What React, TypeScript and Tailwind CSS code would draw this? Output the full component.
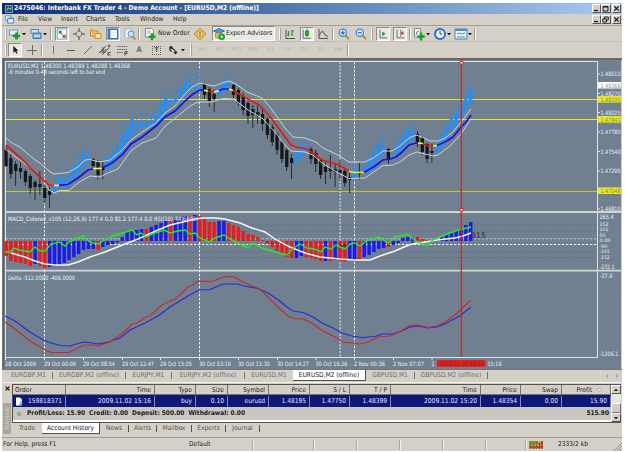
import React from 'react';

type Tone = 'd' | 'u';
type Candle = [Tone, number, number, number, number];

const STEP = 4.84;
const xAt = (i: number) => 6 + i * STEP;

// tone, high, body top, body bottom, low
const candles: Candle[] = [
  ['d', 146, 149, 166, 167], ['d', 154, 158, 174, 179], ['d', 161, 164, 171, 186], ['d', 162, 168, 172, 179],
  ['d', 169, 171, 182, 186], ['d', 174, 176, 188, 194], ['d', 180, 182, 187, 200], ['d', 171, 184, 187, 195],
  ['d', 185, 188, 198, 203], ['d', 187, 191, 195, 208], ['u', 178, 186, 192, 194], ['u', 171, 176, 185, 191],
  ['u', 166, 179, 184, 189], ['u', 171, 177, 183, 191], ['u', 162, 166, 178, 181], ['u', 154, 163, 173, 178],
  ['u', 147, 152, 168, 170], ['u', 147, 157, 161, 166], ['d', 158, 159, 166, 170], ['d', 160, 162, 175, 179],
  ['d', 162, 167, 170, 179], ['u', 154, 158, 169, 171], ['u', 149, 153, 163, 167], ['u', 142, 146, 157, 160],
  ['u', 131, 135, 151, 154], ['u', 122, 128, 143, 147], ['u', 116, 119, 136, 140], ['u', 116, 124, 129, 134],
  ['u', 111, 122, 128, 131], ['u', 111, 123, 127, 130], ['u', 113, 121, 126, 128], ['u', 110, 114, 123, 126],
  ['u', 98, 103, 121, 122], ['u', 92, 97, 111, 114], ['u', 88, 100, 105, 107], ['u', 96, 98, 102, 105],
  ['u', 83, 88, 99, 102], ['u', 76, 81, 94, 97], ['u', 69, 84, 88, 92], ['u', 74, 84, 88, 90],
  ['u', 70, 85, 86, 90], ['d', 83, 84, 95, 99], ['d', 87, 89, 101, 107], ['d', 90, 94, 99, 112],
  ['u', 84, 88, 97, 98], ['u', 76, 80, 91, 93], ['u', 73, 83, 88, 91], ['d', 84, 85, 95, 98],
  ['d', 88, 90, 103, 106], ['d', 93, 96, 110, 115], ['d', 101, 103, 116, 124], ['d', 105, 109, 115, 128],
  ['d', 103, 112, 116, 124], ['d', 109, 114, 124, 131], ['d', 117, 119, 135, 139], ['d', 124, 127, 142, 146],
  ['d', 132, 134, 150, 155], ['d', 140, 142, 159, 163], ['d', 148, 150, 167, 171], ['d', 154, 158, 163, 179],
  ['u', 149, 152, 162, 164], ['u', 139, 144, 156, 160], ['u', 134, 147, 151, 158], ['d', 147, 149, 159, 164],
  ['d', 150, 153, 164, 172], ['d', 158, 160, 175, 179], ['d', 162, 167, 172, 184], ['d', 155, 168, 171, 179],
  ['d', 163, 169, 172, 187], ['d', 160, 170, 173, 179], ['d', 169, 171, 183, 187], ['d', 172, 177, 180, 193],
  ['u', 163, 168, 178, 180], ['d', 163, 173, 174, 180], ['u', 160, 167, 173, 178], ['u', 155, 159, 170, 173],
  ['u', 147, 151, 167, 170], ['u', 139, 144, 159, 162], ['u', 131, 148, 152, 160], ['d', 148, 149, 160, 164],
  ['u', 147, 156, 157, 166], ['u', 139, 143, 154, 158], ['u', 131, 136, 151, 154], ['u', 123, 129, 144, 147],
  ['u', 120, 131, 138, 142], ['d', 131, 134, 142, 147], ['d', 136, 138, 152, 155], ['d', 143, 144, 159, 163],
  ['d', 144, 151, 153, 163], ['u', 141, 145, 153, 154], ['u', 131, 135, 148, 149], ['u', 123, 127, 138, 141],
  ['u', 114, 119, 130, 133], ['u', 107, 112, 126, 128], ['u', 99, 104, 119, 123], ['u', 92, 97, 111, 113],
  ['u', 84, 88, 104, 104],
];

const macdEnds = [
  256, 261, 262, 263, 264, 266, 264, 266, 268, 267, 266, 265, 263, 260, 257, 254, 250, 249, 249, 250, 247, 245, 244, 242.5,
  237, 232, 231, 230, 229, 229, 227, 225, 223, 221, 221, 220, 218, 216, 216, 215, 216, 219, 222, 222, 221, 221, 223, 225,
  227, 231, 234, 235, 237, 240, 244, 247, 251, 254, 257, 258, 258, 256, 257, 258, 259, 261, 261, 261, 260, 261, 262, 260,
  260, 260, 257, 255, 252, 249, 248, 247, 245, 243, 238, 237, 238, 237, 239, 240, 240, 239, 237, 235, 233, 231, 229, 225, 222,
];
const macdTones =
  'rrrrrrbrrbbbbbbbbbbrbbbbbbbbbrbbbbrbbbrbrrrrbbrrrrrrrrrrrrrrbbrrrrbrbrrbbrbbbbbrbbbbbrrrbbbbbbbbb';

const maSegments: [string, string][] = [
  ['#e8190c', '6,145 15,153 25,162 30,168 40,177 49,185 54,185.5'],
  ['#f4ee8a', '54,185.5 59,185.3'],
  ['#1414e6', '59,185.3 68,184.5 78,178 88,170 93,169'],
  ['#f4f41c', '93,168.6 102,168.4'],
  ['#1414e6', '102,168 112,163 122,155 131,144 142,137 156,126 165,117 175,111 185,101 193,94 200,90 204,90.2'],
  ['#f4f41c', '204,90.3 208,91'],
  ['#e8190c', '208,91 214,91.8'],
  ['#f4ee8a', '214,91.8 219,90.8'],
  ['#1414e6', '219,90.8 223,89 229,89'],
  ['#f4f41c', '229,89 233,90.5'],
  ['#e8190c', '233,90.5 246,98 259,105 268,114 280,130 291,145 296,147 307,149 313,153 322,160 333,163 339,165 349,171'],
  ['#f4f41c', '349,171.5 355,172.5 364,172.5'],
  ['#1414e6', '364,172.5 375,166 383,160 390,159 396,157 402,152 409,145 416,143 418,143'],
  ['#f4f41c', '418,143 423,143.5'],
  ['#e8190c', '423,143.8 428,146 433,146'],
  ['#f4f41c', '433,146 437,145.5'],
  ['#1414e6', '437,145.5 445,142 453,137 461,127 466,122 471,115'],
];

const upperBand =
  '5,137 12,143 20,147 28,154 35,160 40,163 49,171 54,174 68,172.5 78,167 85,160 90,159.5 100,162 110,160 122,150 131,140 142,132 156,123 165,113 175,106 185,94 192,87 200,83 209,85 214,86 222,83 229,81 236,84 247,92 262,98 270,107 285,128 293,137 305,138 316,142 323,148 338,155 349,162 365,162 375,157 383,151 392,151 400,146 409,138 416,135 422,137 430,141 438,141 445,138 453,132 461,122 471,109';
const lowerBand =
  '5,149 20,160 35,172 44,181 49,190 54,193 60,190.5 69,190.5 78,183 90,176 100,177 108,173 118,169 131,151 142,143 156,138 165,126 178,116 190,106 198,102 212,102 223,98.5 233,99 239,103 248,110 262,118 275,132 285,145 291,151 305,152 313,155 322,163 335,171 349,178.5 365,178 375,171 383,165.5 393,165 400,162 409,155 417,152 425,154 433,156 438,155 450,146 461,134 471,119';
const signalLine =
  '11,253 25,257 35,261 45,264 55,265 68,265 78,262 90,257 105,252 120,246 138,239 158,230 170,225 183,222 195,219 203,218 216,218 225,219 240,223 252,228 265,232 275,239 290,247 305,253 320,257 340,259 355,260 370,260 380,256 395,251 404,247 412,244 425,242 437,240 455,238 463,236 471,233';
const rsiLine =
  '5,252 10,252 14,248 19,250 30,252 35,247 40,251 45,251 51,244 59,242 65,246 69,242 78,238 83,236 90,242 98,244 103,241 112,236 123,233 132,230 137,235 141,233 146,237 152,234 164,230 170,233 178,231 185,230 190,234 195,233 200,238 209,242 215,238 224,235 230,239 240,244 248,248 253,243 262,248 275,252 287,255 292,249 300,244 307,248 314,249 321,252 325,247 331,249 336,245 345,249 350,244 355,243 360,246 366,241 373,239 379,237 388,243 395,237 401,236 407,234 413,239 420,243 427,245 433,240 440,237 447,234 455,231 463,229 471,227';
const deltaSlow =
  '5,316 15,321 30,332 40,338 48,342 60,345.5 70,346 78,343.5 84,342 92,343 99,344 108,342 120,338 130,330 145,323 158,316 170,307 183,299 193,293 200,290 210,289.5 223,284 237,284 244,286 258,288.5 268,293 277,299 287,307 293,311 303,312.5 313,317 322,323 333,328 342,333 352,336 362,337.5 375,336.5 382,334 393,334 402,331 410,327 418,326 428,328 437,327 447,323 461,315 471,307';
const deltaFast =
  '5,322 15,329 30,341 40,347 47,351 52,352.5 68,352.5 74,350 84,345 93,345 98,346 107,343 118,337 125,331 132,324 137,323 144,318 150,316 162,305 175,299 183,292 188,287 193,285 198,281 212,281.5 218,279 225,276.5 234,277 241,281 252,286 260,289 270,299 279,308 288,316 294,318.5 304,319 313,324 323,331 335,337 343,342 352,343 360,344 368,342 378,337 390,336 397,333 403,330 409,325.5 418,325 428,327.5 437,326 447,321 456,314 471,300';

const priceLabels: [string, number][] = [
  ['1.48515', 74], ['1.48270', 93.5], ['1.48025', 112.5], ['1.47785', 132], ['1.47540', 151.5], ['1.47295', 171], ['1.46810', 209],
];
const levelLabels: [string, number][] = [['1.48195', 99.3], ['1.47941', 119.3], ['1.47048', 190.7]];
const macdLabels: [string, number, number][] = [
  ['152', 224.3, 9], ['101', 229.6, 9], ['50', 235, 6], ['0.00', 240.4, 11],
  ['-90', 246, 8], ['-101', 251.6, 10], ['-152', 257, 10],
];
const timeLabels: [string, number, number][] = [
  ['28 Oct 2009', 5, 31], ['29 Oct 00:09', 44, 32], ['29 Oct 08:54', 83, 32], ['29 Oct 12:47', 122, 32],
  ['29 Oct 15:05', 160, 32], ['30 Oct 03:19', 199, 32], ['30 Oct 11:30', 238, 32], ['30 Oct 14:27', 277, 32],
  ['30 Oct 16:26', 315.5, 32], ['2 Nov 00:36', 354, 31], ['2 Nov 07:07', 393, 31], ['2', 431.5, 3], ['15:19', 487.5, 14],
];

type LabelProps = { x: number; y: number; w: number; fill?: string; size?: number; children: string };

const Label = ({ x, y, w, fill = '#eef2f5', size = 6, children }: LabelProps) => (
  <text x={x} y={y + size * 0.37} textLength={w} lengthAdjust="spacingAndGlyphs" fill={fill} fontSize={size}>
    {children}
  </text>
);

const Chart = () => (
  <svg viewBox="3 60 619 309" className="block h-[309px] w-[619px] bg-[#708090]">
    {/* pane frames */}
    <g stroke="#dfe3e8" fill="none">
      <path d="M5.5 357.5V61.5H597.5V357.5" />
      <path d="M5 212H621M5 270.7H621" strokeWidth="1.8" stroke="#d4d4d2" />
      <path d="M5 357.5H598" />
      {timeLabels.slice(0, 12).map(([, x]) => <path key={x} d={`M${x + 0.5} 357V360`} />)}
      {priceLabels.map(([, y]) => <path key={y} d={`M597 ${y}H600`} />)}
    </g>
    <path d="M3.5 60V369" stroke="#55606c" />
    <path d="M621.5 60V369" stroke="#c8cdd2" />

    {/* grid and levels */}
    <g stroke="#eef1f4" strokeDasharray="2.4 1.6">
      <path d="M44.5 62V357M199.5 62V357M354.5 62V357" />
      <path d="M6 238.8H597" stroke="#c0c8d0" />
      <path d="M6 244.5H597" />
    </g>
    <path d="M340.2 62V357" stroke="#b9c1ca" strokeWidth="1.8" strokeDasharray="2 1.4" />
    <path d="M6 225.2H597M6 231H597M6 252H597M6 257.5H597" stroke="#59636e" strokeWidth=".8" strokeDasharray="1.3 1.7" />
    <path d="M6 99.5H597M6 119.5H597" stroke="#e6e62c" />
    <path d="M6 191.5H597" stroke="#c3c62c" />

    {/* price pane */}
    {candles.map(([tone, high, top, bottom, low], i) => {
      const x = xAt(i);
      const fill = tone === 'd' ? '#14181c' : '#1e90ff';
      return (
        <g key={i} fill={fill}>
          <rect x={x - 0.4} y={high} width={0.8} height={low - high} />
          <rect x={x - 1.6} y={top} width={3.3} height={Math.max(bottom - top, 1)} />
        </g>
      );
    })}
    <polyline points={upperBand} fill="none" stroke="#ccd3d9" />
    <polyline points={lowerBand} fill="none" stroke="#ccd3d9" />
    {maSegments.map(([stroke, points]) => (
      <polyline key={points} points={points} fill="none" stroke={stroke} strokeWidth="1.7" />
    ))}

    {/* MACD pane */}
    {macdEnds.map((end, i) => (
      <rect
        key={i}
        x={xAt(i) - 1.6}
        y={Math.min(end, 241)}
        width={3.4}
        height={Math.abs(end - 241)}
        fill={macdTones[i] === 'r' ? '#ec1a1a' : '#1a1af0'}
      />
    ))}
    <path d="M340 244l2 3 2-3 2 3 2-3M411 242l3 1" stroke="#2a1a18" fill="none" />
    <polyline points={signalLine} fill="none" stroke="#f6f8fa" strokeWidth="1.4" />
    <polyline points={rsiLine} fill="none" stroke="#1ef01e" strokeWidth="1.4" />
    <text x="471.5" y="238.4" textLength="14" fill="#1c2126" fontSize="7.5">315</text>

    {/* delta pane */}
    <polyline points={deltaSlow} fill="none" stroke="#2828d8" strokeWidth="1.1" />
    <polyline points={deltaFast} fill="none" stroke="#c8282a" strokeWidth="1.1" />

    {/* cursor line */}
    <path d="M461.3 62V357" stroke="#c62a24" strokeWidth="1.2" />
    <path d="M460 61.5h3v2.6h-3zM460 208.5h3v2.6h-3z" fill="#fff" stroke="#d8241c" />

    <Label x={8} y={65.5} w={122}>EURUSD,M2  1.48300 1.48389 1.48288 1.48368</Label>
    <Label x={8} y={71.9} w={97}>-6 minutes 0-48 seconds left to bar end</Label>
    <Label x={8} y={218.4} w={188}>MACD_Colored_v105 (12,26,9) 177.4 0.0 81.2 177.4 0.0  RSI(10) 74.6602</Label>
    <Label x={8} y={277.8} w={67}>Delta -512.0000 -406.0000</Label>

    {/* scales */}
    {priceLabels.map(([text, y]) => <Label key={text} x={600.5} y={y} w={20}>{text}</Label>)}
    <rect x="598" y="82" width="23" height="6.5" fill="#fff" />
    <Label x={600.5} y={85.3} w={20} fill="#8a939c">1.48368</Label>
    {levelLabels.map(([text, y]) => (
      <g key={text}>
        <rect x="598" y={y - 3.3} width="23" height="6.6" fill="#e8e62c" />
        <Label x={600.5} y={y} w={20} fill="#8f8c22">{text}</Label>
      </g>
    ))}
    <Label x={599.5} y={216.8} w={14}>265.4</Label>
    {macdLabels.map(([text, y, w]) => <Label key={text} x={599.5} y={y} w={w} size={4.8}>{text}</Label>)}
    <Label x={599.5} y={266.3} w={15}>-272.1</Label>
    <Label x={599.5} y={276} w={13}>-37.9</Label>
    <Label x={599.5} y={353.5} w={19}>-1206.1</Label>
    {timeLabels.map(([text, x, w]) => <Label key={text} x={x} y={363.5} w={w}>{text}</Label>)}
    <rect x="437" y="360" width="48.5" height="6.8" fill="#ea1c18" />
    <Label x={440} y={363.5} w={43} fill="#7d2420">2009.11.02 15:04</Label>
  </svg>
);

const Ico = ({ children, className = '' }: { children: React.ReactNode; className?: string }) => (
  <svg viewBox="0 0 14 14" fill="none" className={`h-3.5 w-3.5 shrink-0 ${className}`}>
    {children}
  </svg>
);

const Caret = ({ className = '' }: { className?: string }) => (
  <svg viewBox="0 0 4 4" className={`h-1 w-1 shrink-0 ${className}`}><path d="M0 1h4L2 3.2z" fill="#111" /></svg>
);

const Grip = ({ className = '' }: { className?: string }) => (
  <div className={`h-3 w-[2px] shrink-0 border-l border-[#f6f4ef] bg-[#a5a198] ${className}`} />
);

const Sep = ({ className = '' }: { className?: string }) => (
  <div className={`h-3 w-[2px] shrink-0 border-r border-white bg-[#9b978e] ${className}`} />
);

const pressed = 'border border-t-[#8f8b83] border-l-[#8f8b83] border-b-white border-r-white bg-[#e9eae6]';

const Magnifier = ({ plus, className }: { plus?: boolean; className: string }) => (
  <Ico className={className}>
    <path d="M8 8l4 4" stroke="#c48a28" strokeWidth="2" />
    <circle cx="5.8" cy="5.8" r="3.6" fill="#d8eefc" stroke="#3f85c8" strokeWidth="1.2" />
    <path d={plus ? 'M3.8 5.8h4M5.8 3.8v4' : 'M3.8 5.8h4'} stroke="#2464b0" strokeWidth="1.2" />
  </Ico>
);

const Toolbar = () => (
  <div className="flex h-4 items-center border-b border-[#c3bfb6]">
    <Grip className="ml-[3px]" />
    <Ico>
      <path d="M2.5 3h8v5h-8z" fill="#eaf3fb" stroke="#5f93c2" />
      <path d="M9.5 5.4v7.2M5.9 9h7.2" stroke="#159a20" strokeWidth="2.6" />
    </Ico>
    <Caret className="ml-px" />
    <Ico className="ml-[3px]">
      <path d="M2 2.5h7.5v4H2z" fill="#cbe2f5" stroke="#5084b8" />
      <path d="M4 6h8v5.5H4z" fill="#82b2dc" stroke="#3d74ad" />
      <path d="M5 9h6" stroke="#fff" />
    </Ico>
    <Caret />
    <Sep className="ml-[3px]" />
    <Ico className={`ml-[3px] ${pressed}`}>
      <path d="M1.5 1h11v12h-11z" fill="#f4faf8" stroke="#6e9cc0" />
      <path d="M4 6.5V4h2.5M4 4l3 3" stroke="#1b8d42" strokeWidth="1.5" />
      <path d="M10.5 8v2.8H7.7M10.5 10.8l-3-3" stroke="#ce4b35" strokeWidth="1.5" />
    </Ico>
    <Ico className="ml-[3px]">
      <path d="M7 3.2L10.8 7 7 10.8 3.2 7z" stroke="#77756f" />
      <path d="M7 1v4M7 9v4M1 7h4M9 7h4" stroke="#77756f" strokeWidth="1.5" />
    </Ico>
    <Ico className="ml-[3px]">
      <path d="M1.5 3h3l1 1H9v5H1.5z" fill="#f5cf69" stroke="#c38b26" />
      <path d="M6 6.5h6v5H6z" fill="#fae29a" stroke="#c38b26" />
      <path d="M3 2l1 1.7 2 .2-1.5 1.3.4 2L3 6.2" fill="#eea631" />
    </Ico>
    <Ico className={`ml-[3px] ${pressed}`}>
      <path d="M1.5 1.5h11v11h-11z" fill="#fff" stroke="#3270b5" strokeWidth="1.6" />
      <path d="M1.5 2h2.5v10H1.5z" fill="#3f7dbd" />
      <path d="M6 5h5M6 8h5" stroke="#cfe0ee" />
    </Ico>
    <Ico className="ml-[3px]">
      <path d="M2 2h7v9H2z" fill="#edf4fa" stroke="#9bb7cf" />
      <path d="M9.5 9.5l3 3" stroke="#c18e2f" strokeWidth="1.8" />
      <circle cx="8" cy="7" r="3" fill="#c9e3f6" stroke="#5c92c2" />
    </Ico>
    <Sep className="ml-px" />
    <Ico className="ml-[3px]">
      <path d="M2.5 1.5h6l2 2V10h-8z" fill="#fff" stroke="#7c8892" />
      <path d="M4 4h4M4 6h4" stroke="#98a6b2" />
      <path d="M9 6.2v7M5.5 9.7h7" stroke="#18a021" strokeWidth="2.5" />
    </Ico>
    <span className="ml-px w-[34px] whitespace-nowrap">New Order</span>
    <Ico className="ml-px">
      <path d="M7 1.2L12.8 7 7 12.8 1.2 7z" fill="#f5c553" stroke="#c2821f" />
      <circle cx="7" cy="7" r="3" fill="#fbe3a0" stroke="#c2821f" strokeWidth=".7" />
      <path d="M7 4.8v4.4" stroke="#8b5410" strokeWidth="1.2" />
    </Ico>
    <div className={`ml-[5px] flex h-[15px] w-[63px] shrink-0 items-center ${pressed}`}>
      <Ico className="-ml-px">
        <path d="M1.5 4L7 1.5 12.5 4 7 6.5z" fill="#489bd8" stroke="#2f71a9" />
        <path d="M3.5 6h6v4.5q-3 1.5-6 0z" fill="#edbd57" stroke="#b3802d" strokeWidth=".8" />
        <circle cx="9.7" cy="9.7" r="3.3" fill="#18a526" />
        <path d="M8.8 8l2.6 1.7-2.6 1.7z" fill="#fff" />
      </Ico>
      <span className="whitespace-nowrap">Expert Advisors</span>
    </div>
    <Grip className="ml-[4px]" />
    <Ico className="ml-[2px]">
      <path d="M3 2.5v9h9" stroke="#555" />
      <path d="M5.5 4v5M9 3v6M9 4h2M5.5 8H4" stroke="#2d8b35" strokeWidth="1.2" />
    </Ico>
    <Ico className={`ml-[3px] ${pressed}`}>
      <path d="M2.5 2v10h9" stroke="#555" />
      <path d="M7 1v10" stroke="#157e1c" />
      <path d="M5.3 3.5h3.4v5H5.3z" fill="#1fc22c" stroke="#157e1c" />
    </Ico>
    <Ico className="ml-[2px]">
      <path d="M3 2v9.5h9" stroke="#555" />
      <path d="M3 9q3-7 5-3t4 3" stroke="#58725a" strokeWidth="1.1" />
    </Ico>
    <Sep className="ml-[2px]" />
    <Magnifier plus className="ml-[3px]" />
    <Magnifier className="ml-[3px]" />
    <Grip className="ml-[3px]" />
    <Ico className={`ml-[3px] ${pressed}`}>
      <path d="M3.5 2v9.5H12" stroke="#556" />
      <path d="M6 4l4 2.8L6 9.5z" fill="#18a022" />
    </Ico>
    <Ico className={`ml-[3px] ${pressed}`}>
      <path d="M3.5 2v9.5H12M8 2v8" stroke="#556" />
      <path d="M8.5 6H12M10.5 4L8.3 6l2.2 2z" fill="#c35626" stroke="#c35626" strokeWidth=".8" />
    </Ico>
    <Sep className="ml-[2px]" />
    <Ico className="ml-px">
      <path d="M2.5 1.5h6V10h-6z" fill="#fff" stroke="#818a92" />
      <path d="M4 8q1-5 3-4" stroke="#666" />
      <path d="M9 5.5v8M5.2 9.5h7.6" stroke="#15a31f" strokeWidth="2.5" />
    </Ico>
    <Caret />
    <Ico className="ml-[3px]">
      <circle cx="7" cy="7" r="5" fill="#edf6fd" stroke="#2b6fc3" strokeWidth="1.9" />
      <path d="M7 3.8V7h2.4" stroke="#444" />
    </Ico>
    <Caret />
    <Ico className="ml-[3px]">
      <path d="M1 2h12v10H1z" fill="#e9f2f9" stroke="#4a82b8" />
      <path d="M1 3h12" stroke="#4a8bc8" strokeWidth="2" />
      <path d="M3 7l3-1 2 1 3-1M3 10h8" stroke="#5b8e98" />
    </Ico>
    <Caret />
    <Sep className="ml-[2px]" />
  </div>
);

const periods = ['M1', 'M5', 'M15', 'M30', 'H1', 'H4', 'D1', 'W1', 'MN'];

const DrawingBar = () => (
  <div className="flex h-4 items-center">
    <Grip className="ml-[3px]" />
    <Ico className={`ml-px ${pressed}`}>
      <path d="M5 2v8.5l2-2 1.5 3 1.5-.8-1.4-2.7H11z" fill="#222" />
    </Ico>
    <Ico className="ml-[3px]"><path d="M7.5 2v10M2 7.5h10" stroke="#6e6b65" /></Ico>
    <Sep className="ml-[2px]" />
    <Ico className="ml-[4px]"><path d="M6.5 3v8" stroke="#77746e" /></Ico>
    <Ico className="ml-[3px]"><path d="M3 7.5h8" stroke="#55524d" /></Ico>
    <Ico className="ml-[3px]"><path d="M3 11l8-8" stroke="#66635d" /></Ico>
    <Ico className="ml-[3px]">
      <path d="M1 10l7-7M4 12l7-7M3 7h6M2 9h6M5 4v6" stroke="#54514c" strokeWidth=".9" />
      <path d="M11 1.5v3M9.7 3h2.6M9.5 9.5h3M9.5 12h3M10 9.5v2.5" stroke="#333" strokeWidth=".8" />
    </Ico>
    <Ico className="ml-[3px]">
      <path d="M2 3.5h10M2 6.5h10M2 9.5h6" stroke="#65625c" strokeDasharray="1.5 .7" />
      <path d="M10 8.7h3M10 10.5h2.4M10 8.5v4" stroke="#333" strokeWidth=".9" />
    </Ico>
    <span className="ml-[3px] w-3.5 text-center text-[7.5px] font-bold text-[#6b6862]">A</span>
    <div className="ml-[6px] grid h-[9px] w-[9px] place-items-center border border-dotted border-[#66635d] text-[6.5px] leading-none font-bold text-[#55524d]">T</div>
    <Ico className="ml-[5px]">
      <path d="M3 4.5L5 2.5l2 2-2 2z" fill="#33302c" />
      <path d="M4 4v3.5l2 1M6 5l3 2.5" stroke="#33302c" strokeWidth="1.2" />
      <path d="M7.5 9.5l2-2 2 2-2 2z" fill="#33302c" />
    </Ico>
    <Caret className="ml-px" />
    <Grip className="ml-[5px]" />
    <div className="ml-[2px] flex text-[5.5px] text-[#b7b3aa]">
      {periods.map(p => <span key={p} className="w-[17px] text-center">{p}</span>)}
    </div>
    <Sep />
  </div>
);

const winBtn = 'grid h-[9px] w-[9.5px] place-items-center border border-t-white border-l-white border-b-[#55524d] border-r-[#55524d] bg-[#d4d0c8]';

const WindowButtons = ({ restore }: { restore?: boolean }) => (
  <div className="ml-auto flex items-center pr-px">
    <div className={winBtn}><svg viewBox="0 0 7 7" className="h-[7px] w-[7px]"><path d="M1 5.5h4" stroke="#111" strokeWidth="1.2" /></svg></div>
    <div className={winBtn}>
      <svg viewBox="0 0 7 7" className="h-[7px] w-[7px]" fill="none" stroke="#111" strokeWidth=".9">
        <path d={restore ? 'M2.5 3V1h3.8v3H5M.8 3h3.7v3H.8z' : 'M1 1.5h5V6H1zM1 2h5'} />
      </svg>
    </div>
    <div className={`${winBtn} ml-px`}><svg viewBox="0 0 7 7" className="h-[7px] w-[7px]"><path d="M1.3 1.3l4.4 4.4M5.7 1.3L1.3 5.7" stroke="#111" strokeWidth="1.2" /></svg></div>
  </div>
);

const TitleBar = () => (
  <div className="flex h-[11px] items-center bg-linear-to-r from-[#0c2c78] via-[#5a80b0] to-[#a9cbf2] text-white">
    <svg viewBox="0 0 9 9" className="ml-[3px] h-2 w-2"><path d="M.5.5h8v8h-8z" fill="#2b4f62" stroke="#7fb9c9" /><path d="M2 6l2-3 2 2 1-2" stroke="#f1dc74" fill="none" /></svg>
    <span className="ml-px text-[6.7px] font-bold whitespace-nowrap">
      2475046: Interbank FX Trader 4 - Demo Account - [EURUSD,M2 (offline)]
    </span>
    <WindowButtons />
  </div>
);

const menus: [string, string][] = [
  ['File', 'w-[20px]'], ['View', 'w-[23px]'], ['Insert', 'w-[25px]'], ['Charts', 'w-[29px]'],
  ['Tools', 'w-[25px]'], ['Window', 'w-[33px]'], ['Help', 'w-[20px]'],
];

const MenuBar = () => (
  <div className="flex h-3 items-center border-b border-[#a39f96]">
    <svg viewBox="0 0 10 10" className="ml-[3px] h-[9px] w-[9px]"><path d="M.5 1h6v5h-6z" fill="#fff" stroke="#4f8dc9" /><path d="M3 3.5h6.3V9H3z" fill="#eaf4fd" stroke="#3a79bc" /><path d="M3 4h6.3" stroke="#3a79bc" /></svg>
    <div className="ml-1 flex">
      {menus.map(([name, width]) => <span key={name} className={width}>{name}</span>)}
    </div>
    <WindowButtons restore />
  </div>
);

const chartTabs: [string, string][] = [
  ['EURGBP,M1', 'w-[48px]'], ['EURGBP,M2 (offline)', 'w-[73px]'], ['EURJPY,M1', 'w-[46px]'],
  ['EURJPY,M2 (offline)', 'w-[73px]'], ['EURUSD,M1', 'w-[48px]'], ['EURUSD,M2 (offline)', 'w-[73px]'],
  ['GBPUSD,M1', 'w-[49px]'], ['GBPUSD,M2 (offline)', 'w-[73px]'],
];

const ChartTabs = () => (
  <div className="flex h-[13px] items-start border-t border-[#77746e] pl-[3px] text-[#6f6c66]">
    {chartTabs.map(([name, width]) => (
      <div
        key={name}
        className={`${width} flex h-[11px] items-center justify-center whitespace-nowrap ${
          name === 'EURUSD,M2 (offline)' ? 'border-r border-b border-[#55524d] bg-white text-[#222]' : ''
        }`}
      >
        <span className="flex-1 text-center">{name}</span>
        {name !== 'EURUSD,M2 (offline)' && name !== 'EURUSD,M1' && <span className="h-[7px] w-px bg-[#77746e]" />}
      </div>
    ))}
    <svg viewBox="0 0 14 6" className="mt-[3px] mr-[3px] ml-auto h-[6px] w-[14px]" fill="#b49b98"><path d="M3 .8v4.4L.8 3zM11 .8v4.4L13.2 3z" /></svg>
  </div>
);

const columns: [string, string, string][] = [
  ['Order', '159818371', 'w-[53px]'], ['Time', '2009.11.02 15:16', 'w-[89px]'], ['Type', 'buy', 'w-[41px]'],
  ['Size', '0.10', 'w-[32px]'], ['Symbol', 'eurusd', 'w-[41px]'], ['Price', '1.48195', 'w-[41px]'],
  ['S / L', '1.47750', 'w-[40px]'], ['T / P', '1.48399', 'w-[41px]'], ['Time', '2009.11.02 15:20', 'w-[90px]'],
  ['Price', '1.48354', 'w-[40px]'], ['Swap', '0.00', 'w-[41px]'], ['Profit', '15.90', 'w-[49px]'],
];

const terminalTabs: [string, string][] = [
  ['News', 'w-[29px]'], ['Alerts', 'w-[28px]'], ['Mailbox', 'w-[35px]'], ['Experts', 'w-[34px]'], ['Journal', 'w-[34px]'],
];

const Terminal = () => (
  <div className="flex h-[55px] border-t border-[#f4f2ee] pt-px">
    <div className="flex w-[10px] flex-col items-center justify-between pt-[2px] pb-[3px]">
      <svg viewBox="0 0 5 5" className="h-[5px] w-[5px]"><path d="M.6.6l3.8 3.8M4.4.6L.6 4.4" stroke="#111" strokeWidth="1.2" /></svg>
      <div className="h-[31px] w-2 rotate-180 bg-[#aaa69e] text-center text-[6px] leading-[8px] text-[#d8d4cc] [writing-mode:vertical-rl]">Terminal</div>
    </div>
    <div className="flex w-[609px] flex-col">
      <div className="flex h-[39px] border-t border-l border-b border-[#55524d]">
        <div className="flex w-[598px] flex-col bg-white">
          <div className="flex h-[10px] bg-[#d4d0c8] leading-[10px]">
            {columns.map(([head, , width], i) => (
              <div key={i} className={`${width} shrink-0 border-r border-b border-[#77746e] whitespace-nowrap ${i === 0 ? 'pl-[2px]' : 'pr-[3px] text-right'}`}>
                {head}
                {head === 'Profit' && <svg viewBox="0 0 5 4" className="mx-[5px] inline h-1 w-[5px]"><path d="M0 .5h5L2.5 3.8z" fill="#eee" stroke="#918d84" strokeWidth=".5" /></svg>}
              </div>
            ))}
          </div>
          <div className="flex h-3 items-center bg-[#0e1878] text-[#e4e8f4]">
            {columns.map(([, value, width], i) => (
              <div key={i} className={`${width} flex h-[11px] shrink-0 items-center justify-end border-r border-[#8088c0] pr-[3px] whitespace-nowrap`}>
                {i === 0 && (
                  <svg viewBox="0 0 8 9" className="mr-auto ml-[2px] h-[9px] w-2"><path d="M1 .5h4l2 2v6H1z" fill="#fff" /><path d="M6 4v4M4.5 6.5L6 8.3l1.5-1.8" stroke="#2c8bd0" fill="none" /></svg>
                )}
                {value}
              </div>
            ))}
          </div>
          <div className="flex h-[13px] items-center justify-between bg-[#c9c7c1] pr-[2px] pl-1 text-[6.5px] font-bold">
            <div className="flex items-center">
              <span className="mr-[6px] h-1 w-1 rounded-full border border-[#88857e]" />
              <span className="whitespace-pre">Profit/Loss: 15.90  Credit: 0.00  Deposit: 500.00  Withdrawal: 0.00</span>
            </div>
            <span>515.90</span>
          </div>
        </div>
        <div className="flex w-[10px] flex-col justify-between bg-[#e9e7e2]">
          <div className={winBtn}><Caret className="rotate-180" /></div>
          <div className="mt-auto h-[10px] border border-[#77746e] border-t-white border-l-white bg-[#d4d0c8]" />
          <div className={winBtn}><Caret /></div>
        </div>
      </div>
      <div className="flex h-[11px] items-start leading-[11px] text-[#55524d]">
        <span className="w-[30px] text-center">Trade</span>
        <span className="h-[11px] w-[58px] border-r border-b border-[#55524d] bg-white text-center leading-[10px] whitespace-nowrap text-[#111]">Account History</span>
        {terminalTabs.map(([name, width]) => (
          <div key={name} className={`${width} flex items-center`}>
            <span className="flex-1 text-center">{name}</span>
            <span className="h-[7px] w-px bg-[#55524d]" />
          </div>
        ))}
      </div>
    </div>
  </div>
);

const cellEdge = 'h-[10px] border-l border-[#aaa69d] shadow-[inset_1px_0_0_#f2f0ec]';

const StatusBar = () => (
  <div className="flex h-[14px] items-center border-t border-[#a39f96]">
    <span className="w-[185px] pl-px">For Help, press F1</span>
    <span className="w-[65px] pl-[2px]">Default</span>
    <span className={`w-[61px] ${cellEdge}`} />
    <span className={`w-[43px] ${cellEdge}`} />
    <span className={`w-[43px] ${cellEdge}`} />
    <span className={`w-[43px] ${cellEdge}`} />
    <span className={`w-[43px] ${cellEdge}`} />
    <span className={`w-[40px] ${cellEdge}`} />
    <div className={`flex w-[84px] items-center ${cellEdge}`}>
      <svg viewBox="0 0 15 8" className="ml-[3px] h-2 w-[15px]">
        <path d="M0 .5h14v3H0z" fill="#a0a428" />
        <path d="M1.5 0v8M4.5 0v8M7.5 0v8" stroke="#6e7a18" strokeWidth="2" />
        <path d="M0 6h14M10.5 2v6M13 0v8" stroke="#c02c24" strokeWidth="1.6" />
      </svg>
      <span className="ml-[14px] whitespace-nowrap">2333/2 kb</span>
    </div>
    <svg viewBox="0 0 8 8" className="mt-1 ml-auto h-2 w-2" stroke="#8f8b83"><path d="M0 8l8-8M3 8l5-5M6 8l2-2" /></svg>
  </div>
);

export default function App() {
  return (
    <div className="h-[452px] w-[625px] overflow-hidden bg-white pt-[3px] pl-[2px] font-['DejaVu_Sans_Condensed','DejaVu_Sans',sans-serif] text-[6.6px] leading-none text-[#1c1b1a]">
      <div className="w-[620px] bg-[#d4d0c8]">
        <TitleBar />
        <MenuBar />
        <Toolbar />
        <DrawingBar />
        <div className="border-t-2 border-l border-t-[#6a6762] border-l-[#77746e]">
          <Chart />
        </div>
        <ChartTabs />
        <Terminal />
        <StatusBar />
      </div>
    </div>
  );
}
